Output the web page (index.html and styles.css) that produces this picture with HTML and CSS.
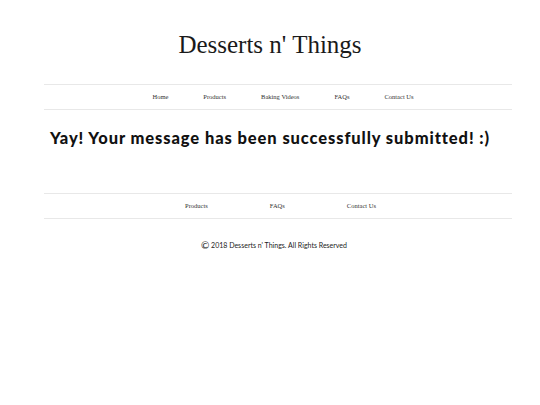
FILE: index.html
```html
<!DOCTYPE html>
<html>
<head>
<meta charset="utf-8">
<link rel="stylesheet" href="styles.css">
</head>
<body>
<header class="site-header">
  <h1 class="site-title">Desserts n' Things</h1>
</header>
<nav class="main-nav">
  <a href="#">Home</a>
  <a href="#">Products</a>
  <a href="#">Baking Videos</a>
  <a href="#">FAQs</a>
  <a href="#">Contact Us</a>
</nav>
<main class="content">
  <h2 class="message">Yay! Your message has been successfully submitted! :)</h2>
</main>
<nav class="footer-nav">
  <a href="#">Products</a>
  <a href="#">FAQs</a>
  <a href="#">Contact Us</a>
</nav>
<p class="copyright"><span class="copy-sign">©</span> 2018 Desserts n' Things. All Rights Reserved</p>
</body>
</html>
```
FILE: styles.css
```css
html, body {
  margin: 0;
  padding: 0;
  background: #fff;
  color: #111;
}
.site-header {
  display: flex;
  justify-content: center;
  padding-top: 31px;
  height: 53px;
  box-sizing: border-box;
}
.site-title {
  margin: 0;
  font-family: "Liberation Serif", serif;
  font-weight: normal;
  font-size: 25px;
  line-height: 28px;
  color: #1a1a1a;
}
.main-nav, .footer-nav {
  margin-left: 44px;
  width: 468px;
  border-top: 1px solid #e8e8e8;
  border-bottom: 1px solid #e8e8e8;
  display: flex;
  justify-content: center;
  align-items: center;
  box-sizing: border-box;
  font-family: "Liberation Serif", serif;
  font-size: 6.5px;
  padding-bottom: 2px;
}
.main-nav {
  margin-top: 31px;
  height: 26px;
  gap: 35px;
  padding-left: 10px;
}
.footer-nav {
  height: 26px;
  gap: 62px;
  padding-left: 5px;
}
.main-nav a, .footer-nav a {
  color: #333;
  text-decoration: none;
}
.content {
  height: 83px;
  display: flex;
  justify-content: center;
}
.message {
  margin: 18px 0 0 0;
  font-family: "Lato", sans-serif;
  font-weight: 900;
  font-size: 16.5px;
  letter-spacing: 0.9px;
  line-height: 20px;
  color: #111;
}
.copyright {
  margin: 21px 0 0 0;
  text-align: center;
  padding-left: 8px;
  font-family: "Lato", sans-serif;
  font-size: 7px;
  line-height: 10px;
  color: #222;
}
.copy-sign {
  font-size: 10px;
  vertical-align: -1px;
}
```
